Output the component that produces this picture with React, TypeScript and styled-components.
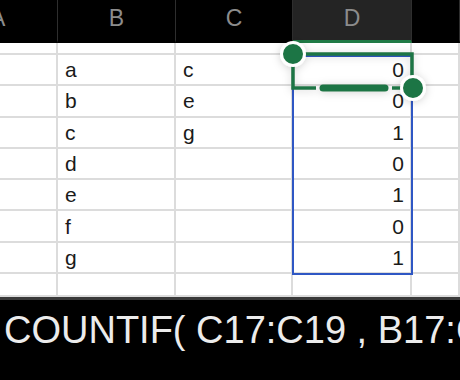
import styled, { createGlobalStyle } from 'styled-components';

const GlobalStyle = createGlobalStyle`
  html, body {
    margin: 0;
    padding: 0;
    background: #fff;
  }
  * { box-sizing: border-box; }
`;

const COLS = '58px 118px 117px 119px 1fr';
const ROW_H = 31.3;

const Screen = styled.div`
  width: 460px;
  height: 380px;
  overflow: hidden;
  display: flex;
  flex-direction: column;
  background: #fff;
  font-family: "Liberation Sans", "Noto Sans", sans-serif;
`;

const HeaderRow = styled.div`
  display: grid;
  grid-template-columns: ${COLS};
  height: 43px;
  background: #000;
  flex: none;
`;

const HeaderCell = styled.div<{ $active?: boolean; $cut?: boolean }>`
  display: flex;
  align-items: center;
  justify-content: ${p => (p.$cut ? 'flex-start' : 'center')};
  padding-bottom: 3px;
  color: #8c8c8c;
  font-size: 23px;
  border-right: 1px solid #2e2e2e;
  background: ${p => (p.$active ? '#242424' : '#000')};
  border-bottom: 3px solid ${p => (p.$active ? '#1f7a45' : '#000')};
  overflow: hidden;

  span {
    margin-left: ${p => (p.$cut ? '-10px' : '0')};
  }
`;

const SheetArea = styled.div`
  position: relative;
  flex: 1;
  min-height: 0;
`;

const Grid = styled.div`
  display: grid;
  grid-template-columns: ${COLS};
  grid-template-rows: 12px repeat(7, ${ROW_H}px) 1fr;
  height: 100%;
`;

const Cell = styled.div<{ $num?: boolean }>`
  display: flex;
  align-items: center;
  justify-content: ${p => (p.$num ? 'flex-end' : 'flex-start')};
  padding: 0 6px 0 7px;
  border-right: 2px solid #dcdcdc;
  border-bottom: 2px solid #dcdcdc;
  color: #1a1a1a;
  font-size: 21px;
  line-height: 1;
`;

const BlueRange = styled.div`
  position: absolute;
  left: 292px;
  top: 12px;
  width: 121px;
  height: 220px;
  border: 2px solid #2f57c4;
  pointer-events: none;
`;

const SelectionLayer = styled.svg`
  position: absolute;
  left: 0;
  top: -43px;
  width: 460px;
  height: 160px;
  overflow: visible;
  pointer-events: none;
`;

const FormulaBar = styled.div`
  flex: none;
  height: 83px;
  background: #000;
  border-top: 3px solid #3a3a3a;
  display: flex;
  align-items: flex-start;
  padding: 10px 0 0 4px;
  white-space: nowrap;
  overflow: hidden;
`;

const FormulaText = styled.span`
  color: #ececec;
  font-family: "Liberation Sans", Arial, sans-serif;
  font-size: 38px;
  line-height: 1.1;
`;

const columnB = ['a', 'b', 'c', 'd', 'e', 'f', 'g'];
const columnC = ['c', 'e', 'g', '', '', '', ''];
const columnD = ['0', '0', '1', '0', '1', '0', '1'];

function SelectionHandles() {
  const green = '#1f7445';
  return (
    <SelectionLayer viewBox="0 0 460 160">
      <defs>
        <filter id="sh" x="-20%" y="-40%" width="140%" height="180%">
          <feDropShadow dx="0" dy="1" stdDeviation="4" floodColor="#000" floodOpacity="0.18" />
        </filter>
      </defs>
      <g filter="url(#sh)">
        <path d="M293 54 H412 V88" fill="none" stroke={green} strokeWidth="3.5" />
        <path d="M293 54 V88 H316" fill="none" stroke={green} strokeWidth="3.5" />
        <line x1="323" y1="88" x2="385" y2="88" stroke={green} strokeWidth="7" strokeLinecap="round" />
        <line x1="392" y1="88" x2="405" y2="88" stroke={green} strokeWidth="3.5" />
        <circle cx="293" cy="54" r="11.5" fill={green} stroke="#fff" strokeWidth="3" />
        <circle cx="413" cy="88" r="11.5" fill={green} stroke="#fff" strokeWidth="3" />
      </g>
    </SelectionLayer>
  );
}

export default function App() {
  return (
    <Screen>
      <GlobalStyle />
      <HeaderRow>
        <HeaderCell $cut><span>A</span></HeaderCell>
        <HeaderCell>B</HeaderCell>
        <HeaderCell>C</HeaderCell>
        <HeaderCell $active>D</HeaderCell>
        <HeaderCell />
      </HeaderRow>
      <SheetArea>
        <Grid>
          {[0, 1, 2, 3, 4].map(c => <Cell key={`top-${c}`} />)}
          {columnB.map((b, i) => (
            <>
              <Cell key={`a-${i}`} />
              <Cell key={`b-${i}`}>{b}</Cell>
              <Cell key={`c-${i}`}>{columnC[i]}</Cell>
              <Cell key={`d-${i}`} $num>{columnD[i]}</Cell>
              <Cell key={`e-${i}`} />
            </>
          ))}
          {[0, 1, 2, 3, 4].map(c => <Cell key={`bot-${c}`} />)}
        </Grid>
        <BlueRange />
        <SelectionHandles />
      </SheetArea>
      <FormulaBar>
        <FormulaText>COUNTIF( C17:C19 , B17:C19)</FormulaText>
      </FormulaBar>
    </Screen>
  );
}
